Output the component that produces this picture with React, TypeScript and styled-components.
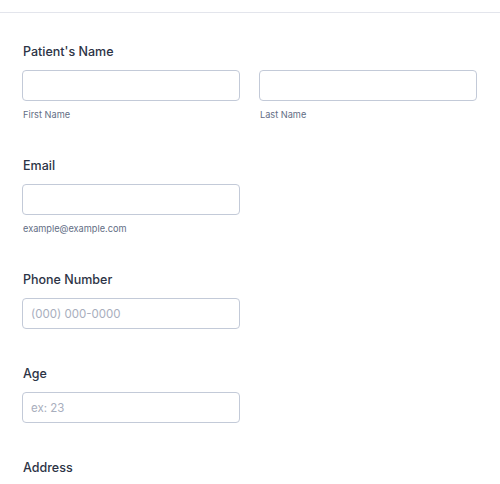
import styled, { createGlobalStyle } from "styled-components";

const GlobalStyle = createGlobalStyle`
  body {
    margin: 0;
    background: #ffffff;
    font-family: Inter, "Noto Sans", sans-serif;
  }
  * {
    box-sizing: border-box;
  }
`;

interface FieldProps {
  label: string;
  inputs: { placeholder?: string; sublabel?: string }[];
  width?: number;
}

const Field = ({ label, inputs, width = 218 }: FieldProps) => (
  <FieldWrap>
    <Label>{label}</Label>
    <InputRow>
      {inputs.map((input, i) => (
        <InputCol key={i} $width={width}>
          <TextInput placeholder={input.placeholder} />
          {input.sublabel && <SubLabel>{input.sublabel}</SubLabel>}
        </InputCol>
      ))}
    </InputRow>
  </FieldWrap>
);

const App = () => {
  return (
    <>
      <GlobalStyle />
      <Page>
        <Form>
          <Field
            label="Patient's Name"
            inputs={[{ sublabel: "First Name" }, { sublabel: "Last Name" }]}
          />
          <Field label="Email" inputs={[{ sublabel: "example@example.com" }]} />
          <Field label="Phone Number" inputs={[{ placeholder: "(000) 000-0000" }]} />
          <Field label="Age" inputs={[{ placeholder: "ex: 23" }]} />
          <Field label="Address" inputs={[]} />
        </Form>
      </Page>
    </>
  );
};

export default App;

const Page = styled.div`
  width: 500px;
  height: 484px;
  padding-top: 12px;
  overflow: hidden;
`;

const Form = styled.div`
  border-top: 1px solid #e3e5ec;
  padding: 28px 22px 0;
  display: flex;
  flex-direction: column;
  gap: 34px;
`;

const FieldWrap = styled.div`
  display: flex;
  flex-direction: column;
`;

const Label = styled.div`
  font-size: 12.5px;
  line-height: 21px;
  font-weight: 500;
  color: #2c3345;
  padding-left: 1px;
  margin-bottom: 8px;
`;

const InputRow = styled.div`
  display: flex;
  gap: 19px;
`;

const InputCol = styled.div<{ $width: number }>`
  width: ${({ $width }) => $width}px;
  display: flex;
  flex-direction: column;
`;

const TextInput = styled.input`
  width: 100%;
  height: 31px;
  border: 1px solid #c3cad8;
  border-radius: 4px;
  padding: 0 8px;
  font-family: Inter, "Noto Sans", sans-serif;
  font-size: 11.5px;
  color: #2c3345;
  outline: none;

  &::placeholder {
    color: #a8aebd;
  }
`;

const SubLabel = styled.div`
  margin-top: 7px;
  padding-left: 1px;
  font-size: 9.2px;
  line-height: 13px;
  color: #626d84;
`;
